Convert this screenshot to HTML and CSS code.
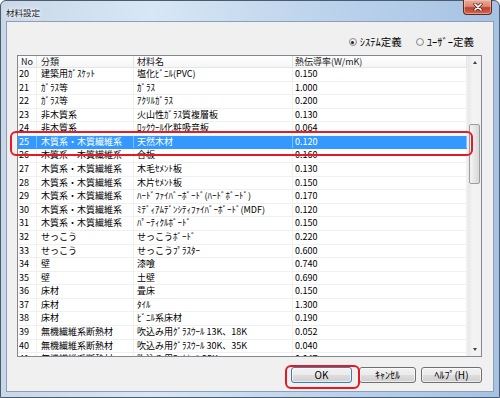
FILE: index.html
```html
<!DOCTYPE html>
<html lang="ja">
<head>
<meta charset="utf-8">
<title>材料設定</title>
<link rel="stylesheet" href="styles.css">
</head>
<body>
<div class="window">
  <div class="titlebar">
    <span class="title">材料設定</span>
    <div class="close">
      <svg width="10" height="8" viewBox="0 0 10 8">
        <path d="M2 1.2 L8 6.8 M8 1.2 L2 6.8" stroke="#4a1c14" stroke-width="3.2" stroke-linecap="round"/>
        <path d="M2 1.2 L8 6.8 M8 1.2 L2 6.8" stroke="#ffffff" stroke-width="1.7" stroke-linecap="round"/>
      </svg>
    </div>
  </div>
  <div class="client">
    <div class="radios">
      <label class="radio"><span class="dot checked"></span><span>ｼｽﾃﾑ定義</span></label>
      <label class="radio"><span class="dot"></span><span>ﾕｰｻﾞｰ定義</span></label>
    </div>
    <div class="listview">
      <div class="lv-main">
        <div class="hdr">
          <div class="hc">No</div><div class="hc">分類</div><div class="hc">材料名</div><div class="hc">熱伝導率(W/mK)</div>
        </div>
        <div class="rows">
          <div class="row"><div class="c c1">20</div><div class="c c2">建築用ｶﾞｽｹｯﾄ</div><div class="c c3">塩化ﾋﾞﾆﾙ(PVC)</div><div class="c c4">0.150</div></div>
          <div class="row"><div class="c c1">21</div><div class="c c2">ｶﾞﾗｽ等</div><div class="c c3">ｶﾞﾗｽ</div><div class="c c4">1.000</div></div>
          <div class="row"><div class="c c1">22</div><div class="c c2">ｶﾞﾗｽ等</div><div class="c c3">ｱｸﾘﾙｶﾞﾗｽ</div><div class="c c4">0.200</div></div>
          <div class="row"><div class="c c1">23</div><div class="c c2">非木質系</div><div class="c c3">火山性ｶﾞﾗｽ質複層板</div><div class="c c4">0.130</div></div>
          <div class="row"><div class="c c1">24</div><div class="c c2">非木質系</div><div class="c c3">ﾛｯｸｳｰﾙ化粧吸音板</div><div class="c c4">0.064</div></div>
          <div class="row sel"><div class="c c1">25</div><div class="c c2">木質系・木質繊維系</div><div class="c c3">天然木材</div><div class="c c4">0.120</div></div>
          <div class="row"><div class="c c1">26</div><div class="c c2">木質系・木質繊維系</div><div class="c c3">合板</div><div class="c c4">0.160</div></div>
          <div class="row"><div class="c c1">27</div><div class="c c2">木質系・木質繊維系</div><div class="c c3">木毛ｾﾒﾝﾄ板</div><div class="c c4">0.130</div></div>
          <div class="row"><div class="c c1">28</div><div class="c c2">木質系・木質繊維系</div><div class="c c3">木片ｾﾒﾝﾄ板</div><div class="c c4">0.150</div></div>
          <div class="row"><div class="c c1">29</div><div class="c c2">木質系・木質繊維系</div><div class="c c3">ﾊｰﾄﾞﾌｧｲﾊﾞｰﾎﾞｰﾄﾞ(ﾊｰﾄﾞﾎﾞｰﾄﾞ)</div><div class="c c4">0.170</div></div>
          <div class="row"><div class="c c1">30</div><div class="c c2">木質系・木質繊維系</div><div class="c c3">ﾐﾃﾞｨｱﾑﾃﾞﾝｼﾃｨﾌｧｲﾊﾞｰﾎﾞｰﾄﾞ(MDF)</div><div class="c c4">0.120</div></div>
          <div class="row"><div class="c c1">31</div><div class="c c2">木質系・木質繊維系</div><div class="c c3">ﾊﾟｰﾃｨｸﾙﾎﾞｰﾄﾞ</div><div class="c c4">0.150</div></div>
          <div class="row"><div class="c c1">32</div><div class="c c2">せっこう</div><div class="c c3">せっこうﾎﾞｰﾄﾞ</div><div class="c c4">0.220</div></div>
          <div class="row"><div class="c c1">33</div><div class="c c2">せっこう</div><div class="c c3">せっこうﾌﾟﾗｽﾀｰ</div><div class="c c4">0.600</div></div>
          <div class="row"><div class="c c1">34</div><div class="c c2">壁</div><div class="c c3">漆喰</div><div class="c c4">0.740</div></div>
          <div class="row"><div class="c c1">35</div><div class="c c2">壁</div><div class="c c3">土壁</div><div class="c c4">0.690</div></div>
          <div class="row"><div class="c c1">36</div><div class="c c2">床材</div><div class="c c3">畳床</div><div class="c c4">0.150</div></div>
          <div class="row"><div class="c c1">37</div><div class="c c2">床材</div><div class="c c3">ﾀｲﾙ</div><div class="c c4">1.300</div></div>
          <div class="row"><div class="c c1">38</div><div class="c c2">床材</div><div class="c c3">ﾋﾞﾆﾙ系床材</div><div class="c c4">0.190</div></div>
          <div class="row"><div class="c c1">39</div><div class="c c2">無機繊維系断熱材</div><div class="c c3">吹込み用ｸﾞﾗｽｳｰﾙ 13K、18K</div><div class="c c4">0.052</div></div>
          <div class="row"><div class="c c1">40</div><div class="c c2">無機繊維系断熱材</div><div class="c c3">吹込み用ｸﾞﾗｽｳｰﾙ 30K、35K</div><div class="c c4">0.040</div></div>
          <div class="row"><div class="c c1">41</div><div class="c c2">無機繊維系断熱材</div><div class="c c3">吹込み用ﾛｯｸｳｰﾙ 25K</div><div class="c c4">0.047</div></div>
        </div>
      </div>
      <div class="vscroll">
        <div class="sbtn"><span class="arr up"></span></div>
        <div class="track"><div class="thumb"></div></div>
        <div class="sbtn"><span class="arr down"></span></div>
      </div>
    </div>
    <div class="buttons">
      <div class="btn def">OK</div>
      <div class="btn">ｷｬﾝｾﾙ</div>
      <div class="btn">ﾍﾙﾌﾟ(H)</div>
    </div>
  </div>
  <div class="mark mark-row"></div>
  <div class="mark mark-ok"></div>
</div>
</body>
</html>
```
FILE: styles.css
```css
html, body {
  margin: 0;
  padding: 0;
}
body {
  width: 500px;
  height: 398px;
  overflow: hidden;
  background: #ffffff;
  font-family: "Noto Sans CJK JP", "Liberation Sans", sans-serif;
  font-size: 9px;
  color: #000;
}
.window {
  position: relative;
  width: 500px;
  height: 398px;
  box-sizing: border-box;
  border: 1px solid #4d5b6e;
  border-radius: 6px 6px 0 0;
  background: linear-gradient(to right, #c9d8e8 0%, #d8e7f5 30%, #bcd3ec 65%, #a6c2e3 100%);
  padding: 0 5px 5px 5px;
  display: flex;
  flex-direction: column;
}
.titlebar {
  height: 20px;
  display: flex;
  align-items: center;
  justify-content: space-between;
}
.title {
  font-size: 8.5px;
  line-height: 12px;
  color: #1e1e1e;
  text-shadow: 0 0 4px #ffffff, 0 0 6px #ffffff;
  margin-top: 1px;
}
.close {
  align-self: flex-start;
  width: 29px;
  height: 15px;
  margin-top: -1px;
  margin-right: 2px;
  box-sizing: border-box;
  border: 1px solid #5b2a22;
  border-top: none;
  border-radius: 0 0 4px 4px;
  background: linear-gradient(#eaa99a 0%, #da8a77 45%, #c2412b 55%, #d3664f 100%);
  box-shadow: inset 0 0 0 1px rgba(255, 210, 200, 0.5);
  display: flex;
  align-items: center;
  justify-content: center;
}
.close svg {
  display: block;
}
.client {
  flex: 1;
  box-sizing: border-box;
  background: #f0f0f0;
  border: 1px solid #8c9fb6;
  padding: 14px 11px 8px 10px;
  display: flex;
  flex-direction: column;
}
.radios {
  height: 12px;
  display: flex;
  justify-content: flex-end;
  align-items: center;
  gap: 14px;
  padding-right: 8px;
  font-size: 10.5px;
}
.radio {
  display: flex;
  align-items: center;
  gap: 3px;
  line-height: 12px;
}
.dot {
  width: 8px;
  height: 8px;
  box-sizing: border-box;
  border-radius: 50%;
  border: 1px solid #8d8d8d;
  background: radial-gradient(circle at 50% 40%, #ffffff 0%, #e6e6e6 60%, #cfcfcf 100%);
  display: flex;
  align-items: center;
  justify-content: center;
}
.dot.checked::after {
  content: "";
  width: 3px;
  height: 3px;
  border-radius: 50%;
  background: #222;
}
.listview {
  margin-top: 7px;
  height: 302px;
  box-sizing: border-box;
  border: 1px solid #828790;
  background: #ffffff;
  display: flex;
}
.lv-main {
  flex: 1;
  min-width: 0;
  overflow: hidden;
  display: flex;
  flex-direction: column;
}
.hdr, .row {
  display: grid;
  grid-template-columns: 19px 97px 159px 1fr;
}
.hdr {
  height: 12px;
  box-sizing: border-box;
  border-bottom: 1px solid #e5e5e5;
  background: linear-gradient(#ffffff, #f4f5f7);
}
.hc {
  border-right: 1px solid #e3e4e6;
  padding-left: 3px;
  line-height: 11px;
  white-space: nowrap;
  overflow: hidden;
  color: #1a1a1a;
}
.hc:nth-child(2) { padding-left: 4px; }
.hc:nth-child(4) { padding-left: 2px; }
.rows {
  flex: 1;
  overflow: hidden;
}
.row {
  height: 13.58px;
  box-sizing: border-box;
  border-bottom: 1px solid #f0f0f0;
}
.c {
  border-right: 1px solid #f0f0f0;
  line-height: 12px;
  white-space: nowrap;
  overflow: hidden;
}
.c1 { padding-left: 1px; }
.c2 { padding-left: 4px; }
.c3 { padding-left: 3px; overflow: visible; }
.c4 { padding-left: 2px; }
.row.sel {
  background: #3399ff;
  color: #ffffff;
  border-bottom-color: #3399ff;
}
.row.sel .c {
  border-right-color: #7fbfff;
}
.vscroll {
  width: 13px;
  display: flex;
  flex-direction: column;
  background: linear-gradient(to right, #e8e8e8, #f4f4f4 40%, #f1f1f1);
  border-left: 1px solid #efefef;
}
.sbtn {
  height: 13px;
  display: flex;
  align-items: center;
  justify-content: center;
}
.arr {
  width: 0;
  height: 0;
  border-left: 2.5px solid transparent;
  border-right: 2.5px solid transparent;
}
.arr.up { border-bottom: 3px solid #404040; }
.arr.down { border-top: 3px solid #404040; }
.track {
  flex: 1;
  padding: 0 1px;
}
.thumb {
  margin-top: 55px;
  height: 60px;
  box-sizing: border-box;
  border: 1px solid #9c9c9c;
  border-radius: 2px;
  background: linear-gradient(to right, #f4f4f4, #e6e6e6 50%, #d8d8d8);
}
.buttons {
  margin-top: 10px;
  height: 16px;
  display: flex;
  justify-content: flex-end;
  font-size: 10px;
}
.btn {
  width: 61px;
  height: 16px;
  box-sizing: border-box;
  border: 1px solid #707070;
  border-radius: 3px;
  background: linear-gradient(#f2f2f2 0%, #ebebeb 48%, #dddddd 52%, #cfcfcf 100%);
  box-shadow: inset 0 0 0 1px rgba(255, 255, 255, 0.6);
  text-align: center;
  line-height: 14px;
  margin-left: 7px;
}
.btn:nth-child(2) { width: 57px; }
.btn:nth-child(3) { margin-left: 5px; }
.btn.def {
  border-color: #3c7fb1;
}
.mark {
  position: absolute;
  box-sizing: border-box;
  border: 2px solid #e51a24;
  border-radius: 6px;
}
.mark-row {
  left: 9px;
  top: 130px;
  width: 463px;
  height: 25px;
}
.mark-ok {
  left: 284px;
  top: 364px;
  width: 75px;
  height: 24px;
}
```
